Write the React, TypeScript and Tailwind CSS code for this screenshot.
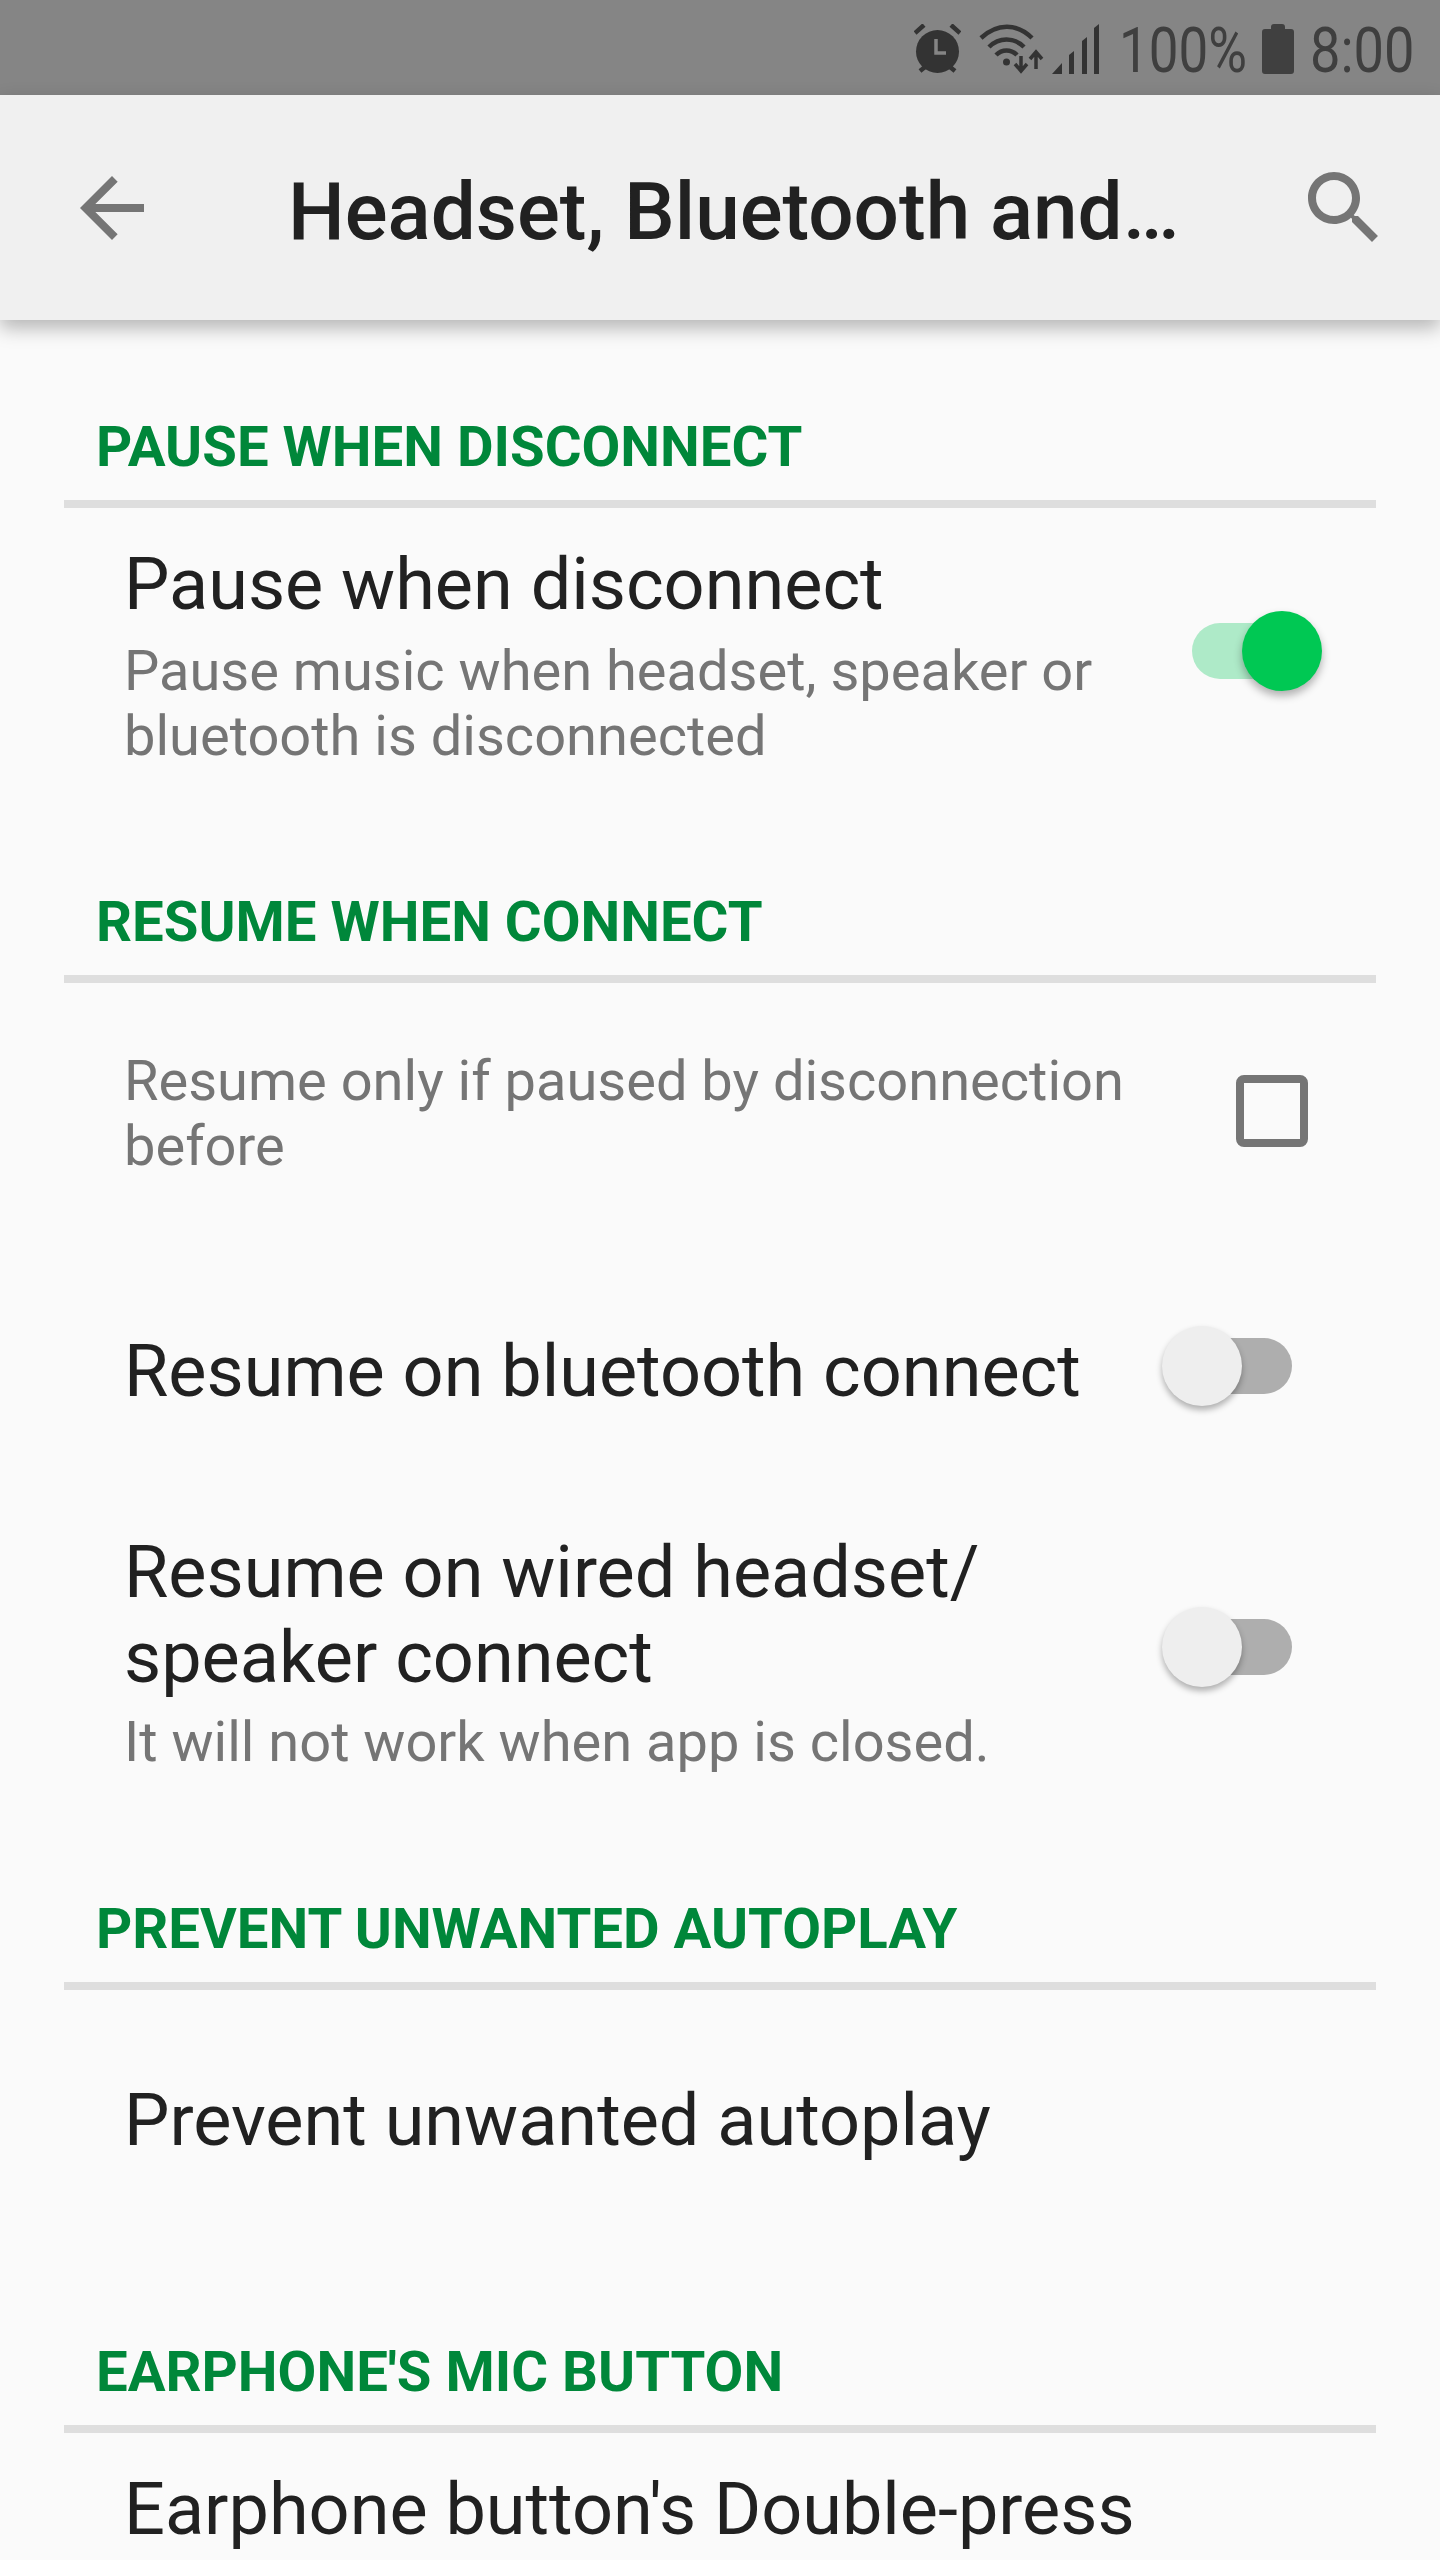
const Font = "font-['Roboto',sans-serif]"

function StatusBar() {
    return (
        <div className="h-[95px] bg-[#858585] flex items-start shrink-0">
            <div className="ml-[914px] mt-[24px] flex items-start">
                {/* alarm */}
                <svg width="47" height="50" viewBox="0 0 47 50" className="text-[#333]">
                    <circle cx="23.5" cy="27.5" r="21.5" fill="currentColor" />
                    <path d="M1 9 L10 1 M46 9 L37 1 M6 47 L11 43 M41 47 L36 43" stroke="currentColor" strokeWidth="4.5" />
                    <path d="M22 15 V29 H32" stroke="#858585" strokeWidth="3.5" fill="none" />
                </svg>
                {/* wifi with data arrows */}
                <svg width="65" height="50" viewBox="0 0 65 50" className="ml-[18px] text-[#333]">
                    <path d="M2 14 C18 -1 38 -1 53 14" stroke="currentColor" strokeWidth="4.5" fill="none" />
                    <path d="M10 23 C20 13 35 13 45 23" stroke="currentColor" strokeWidth="4.5" fill="none" />
                    <path d="M17 31 C23 25 32 25 38 31" stroke="currentColor" strokeWidth="4.5" fill="none" />
                    <circle cx="27.5" cy="38" r="3.5" fill="currentColor" />
                    <path d="M42 32 V44 M36 40 L42 47 L48 40" stroke="currentColor" strokeWidth="3.5" fill="none" />
                    <path d="M57 45 V30 M51 35 L57 28 L63 35" stroke="currentColor" strokeWidth="3.5" fill="none" />
                </svg>
                {/* signal */}
                <svg width="48" height="50" viewBox="0 0 48 50" className="ml-[8px] text-[#333]">
                    <path d="M0 50 L10 39 V50 Z M17 31 L22 27 V50 H17 Z M30 17 L35 13 V50 H30 Z M42 4 L47 0 V50 H42 Z" fill="currentColor" />
                </svg>
            </div>
            <span className={`${Font} absolute left-[1119px] top-[14px] text-[63px] leading-[74px] text-[#3f3f3f] whitespace-nowrap origin-left scale-x-[.84]`}>100%</span>
            <svg width="32" height="50" viewBox="0 0 32 50" className="absolute left-[1262px] top-[24px] text-[#404040]">
                <path d="M9 3 Q9 0 12 0 H20 Q23 0 23 3 V5 H29 Q32 5 32 8 V47 Q32 50 29 50 H3 Q0 50 0 47 V8 Q0 5 3 5 H9 Z" fill="currentColor" />
            </svg>
            <span className={`${Font} absolute left-[1310px] top-[14px] text-[63px] leading-[74px] text-[#3f3f3f] whitespace-nowrap origin-left scale-x-[.86]`}>8:00</span>
        </div>
    )
}

function Toolbar() {
    return (
        <div className="relative z-10 h-[225px] bg-[#f0f0f0] flex items-center pl-[64px] pr-[48px] shadow-[0_8px_18px_rgba(0,0,0,0.28)]">
            <svg width="96" height="96" viewBox="0 0 24 24" fill="#757575" className="shrink-0">
                <path d="M20 11H7.83l5.59-5.59L12 4l-8 8 8 8 1.41-1.41L7.83 13H20v-2z" />
            </svg>
            <div className="ml-[128px] flex-1 text-[80px] leading-[96px] font-medium text-[#212121] whitespace-nowrap pt-[8px]">
                Headset, Bluetooth and…
            </div>
            <svg width="96" height="96" viewBox="0 0 24 24" fill="#757575" className="shrink-0">
                <path d="M15.5 14h-.79l-.28-.27C15.41 12.59 16 11.11 16 9.5 16 5.91 13.09 3 9.5 3S3 5.91 3 9.5 5.91 16 9.5 16c1.61 0 3.09-.59 4.23-1.57l.27.28v.79l5 4.99L20.49 19l-4.99-5zm-6 0C7.01 14 5 11.99 5 9.5S7.01 5 9.5 5 14 7.01 14 9.5 11.99 14 9.5 14z" />
            </svg>
        </div>
    )
}

function SectionHeader({ title, className }: { title: string; className: string }) {
    return (
        <div className={className}>
            <div className="h-[108px] flex items-center pl-[96px] pt-[2px] text-[56.3px] font-bold text-[#00873a] whitespace-nowrap">
                {title}
            </div>
            <div className="mx-[64px] h-[8px] bg-[#dedede]" />
        </div>
    )
}

function Switch({ on, className }: { on: boolean; className: string }) {
    return (
        <div className={`relative shrink-0 w-[120px] h-[56px] rounded-full ${on ? "bg-[#aeeac8]" : "bg-[#aeaeae]"} ${className}`}>
            {on ? (
                <div className="absolute right-[-10px] top-[-12px] w-[80px] h-[80px] rounded-full bg-[#00c853] shadow-[0_5px_8px_rgba(0,0,0,0.3)]" />
            ) : (
                <div className="absolute left-[-10px] top-[-12px] w-[80px] h-[80px] rounded-full bg-[#eeeeee] shadow-[0_4px_6px_rgba(0,0,0,0.3)]" />
            )}
        </div>
    )
}

const itemTitle = "text-[72px] leading-[85px] text-[#212121] whitespace-nowrap"
const itemSub = "text-[56px] leading-[65px] text-[#757575] whitespace-nowrap"

export default function App() {
    return (
        <div className={`${Font} relative w-[1440px] h-[2560px] overflow-hidden bg-[#fafafa]`}>
            <StatusBar />
            <Toolbar />

            <SectionHeader title="PAUSE WHEN DISCONNECT" className="mt-[72px]" />
            <div className="flex items-center justify-between pl-[124px] pt-[34px]">
                <div>
                    <div className={itemTitle}>Pause when disconnect</div>
                    <div className={`${itemSub} mt-[12px]`}>
                        Pause music when headset, speaker or
                        <br />
                        bluetooth is disconnected
                    </div>
                </div>
                <Switch on className="mr-[128px] mb-[9px]" />
            </div>

            <SectionHeader title="RESUME WHEN CONNECT" className="mt-[98px]" />
            <div className="flex items-center justify-between pl-[124px] pt-[66px]">
                <div className={itemSub}>
                    Resume only if paused by disconnection
                    <br />
                    before
                </div>
                <div className="shrink-0 w-[72px] h-[72px] mr-[132px] mb-[6px] border-[8px] border-[#757575] rounded-[8px]" />
            </div>
            <div className="flex items-center justify-between pl-[124px] mt-[150px]">
                <div className={itemTitle}>Resume on bluetooth connect</div>
                <Switch on={false} className="mr-[148px] mb-[12px]" />
            </div>
            <div className="flex items-center justify-between pl-[124px] mt-[116px]">
                <div>
                    <div className={itemTitle}>
                        Resume on wired headset/
                        <br />
                        speaker connect
                    </div>
                    <div className={`${itemSub} mt-[10px]`}>It will not work when app is closed.</div>
                </div>
                <Switch on={false} className="mr-[148px] mb-[12px]" />
            </div>

            <SectionHeader title="PREVENT UNWANTED AUTOPLAY" className="mt-[99px]" />
            <div className="pl-[124px] mt-[88px]">
                <div className={itemTitle}>Prevent unwanted autoplay</div>
            </div>

            <SectionHeader title="EARPHONE'S MIC BUTTON" className="mt-[154px]" />
            <div className="pl-[124px] mt-[34px]">
                <div className={itemTitle}>Earphone button's Double-press</div>
            </div>
        </div>
    )
}
